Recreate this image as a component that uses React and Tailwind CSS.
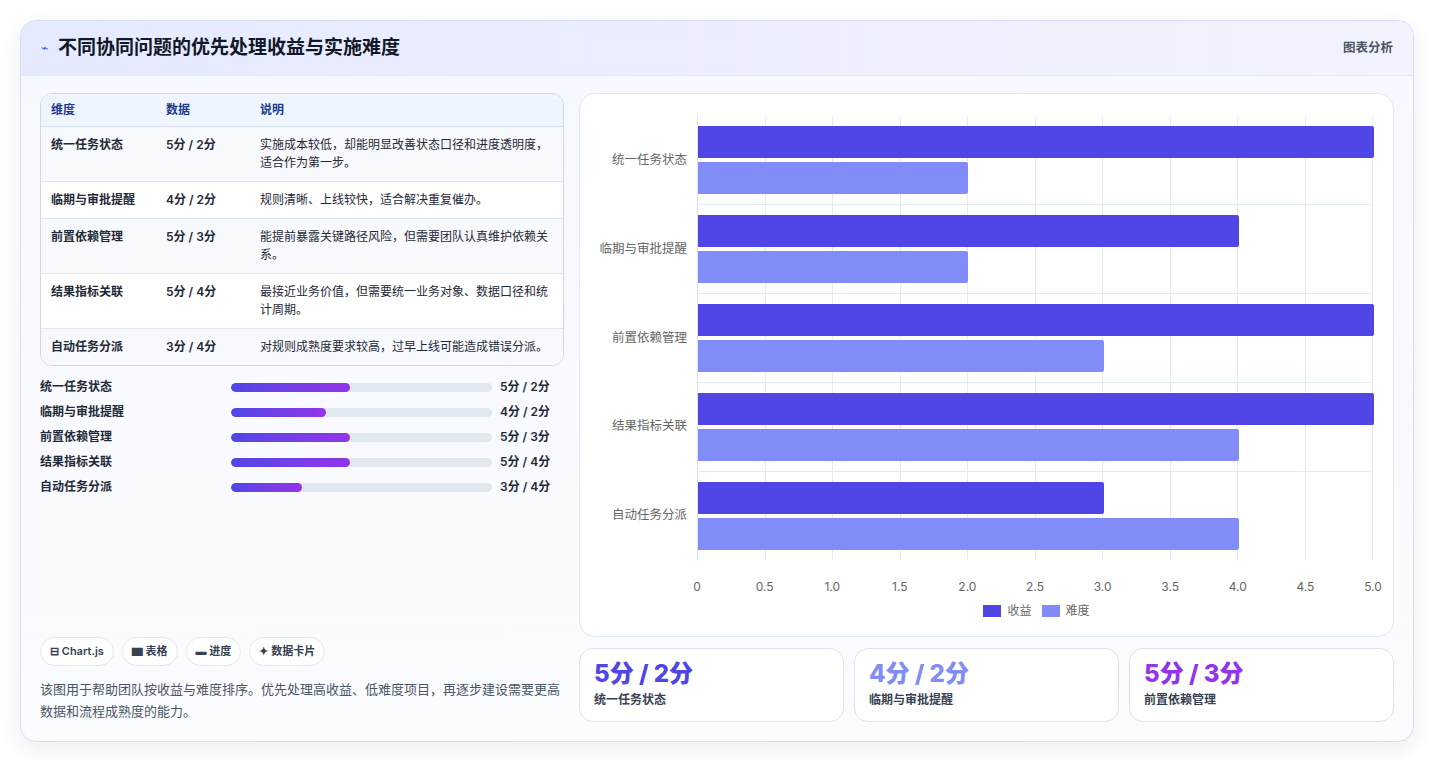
import React from 'react';

const rows = [
  { name: '统一任务状态', a: 5, b: 2, desc: '实施成本较低，却能明显改善状态口径和进度透明度，适合作为第一步。' },
  { name: '临期与审批提醒', a: 4, b: 2, desc: '规则清晰、上线较快，适合解决重复催办。' },
  { name: '前置依赖管理', a: 5, b: 3, desc: '能提前暴露关键路径风险，但需要团队认真维护依赖关系。' },
  { name: '结果指标关联', a: 5, b: 4, desc: '最接近业务价值，但需要统一业务对象、数据口径和统计周期。' },
  { name: '自动任务分派', a: 3, b: 4, desc: '对规则成熟度要求较高，过早上线可能造成错误分派。' },
];

const ticks = ['0', '0.5', '1.0', '1.5', '2.0', '2.5', '3.0', '3.5', '4.0', '4.5', '5.0'];

function Chart() {
  const W = 676;
  return (
    <div className="flex flex-col h-full">
      <div className="flex flex-1">
        <div className="w-[117px] flex flex-col pt-[22px] pb-[12px]">
          {rows.map((r) => (
            <div key={r.name} className="flex-1 flex items-center justify-end pr-[10px] text-[12.5px] text-[#666]">{r.name}</div>
          ))}
        </div>
        <div className="relative w-[676px] mt-[22px] mb-[12px] border-l border-[#d8e4ea]">
          <div className="absolute inset-0 flex">
            {ticks.slice(1).map((t) => (
              <div key={t} className="flex-1 border-r border-[#e3edf1]" />
            ))}
          </div>
          <div className="relative h-full flex flex-col">
            {rows.map((r, i) => (
              <div key={r.name} className={`flex-1 flex flex-col justify-center gap-[4px] ${i < 4 ? 'border-b border-[#e3edf1]' : ''}`}>
                <div className="h-[32px] bg-[#4f46e5] rounded-r-[2px]" style={{ width: (r.a / 5) * W }} />
                <div className="h-[32px] bg-[#818cf8] rounded-r-[2px]" style={{ width: (r.b / 5) * W }} />
              </div>
            ))}
          </div>
        </div>
      </div>
      <div className="flex pl-[117px] h-[30px]">
        <div className="relative w-[676px]">
          {ticks.map((t, i) => (
            <span key={t} className="absolute top-[6px] -translate-x-1/2 text-[12px] text-[#666]" style={{ left: i * 67.6 }}>{t}</span>
          ))}
        </div>
      </div>
      <div className="flex justify-center gap-[10px] pl-[100px] pb-[16px] text-[12px] text-[#666]">
        <span className="flex items-center gap-[6px]"><span className="w-[18px] h-[12px] bg-[#4f46e5]" />收益</span>
        <span className="flex items-center gap-[6px]"><span className="w-[18px] h-[12px] bg-[#818cf8]" />难度</span>
      </div>
    </div>
  );
}

export default function App() {
  return (
    <div className="min-h-[760px] bg-white p-[20px] pr-[21px]" style={{ fontFamily: 'Inter, "Noto Sans CJK SC", sans-serif' }}>
      <div className="rounded-[16px] border border-[#d6dcf3] shadow-[0_8px_24px_rgba(30,40,90,0.08)] bg-gradient-to-b from-[#f6f8ff] to-[#fafcff] overflow-hidden">
        <div className="h-[55px] flex items-center justify-between px-[20px] bg-gradient-to-r from-[#e6eaff] to-[#f2f3ff] border-b border-[#e6e9f7]">
          <div className="flex items-center gap-[10px]">
            <span className="text-[#3b5bdb] text-[12px]">⌁</span>
            <h1 className="text-[19px] font-bold text-[#111827]">不同协同问题的优先处理收益与实施难度</h1>
          </div>
          <span className="text-[12.5px] font-semibold text-[#4b5563]">图表分析</span>
        </div>
        <div className="flex gap-[15px] px-[19px] pt-[17px] pb-[19px]">
          <div className="w-[524px] flex flex-col">
            <div className="rounded-[12px] border border-[#cfd8e6] overflow-hidden bg-white">
              <div className="flex h-[33px] items-center bg-[#eef5ff] border-b border-[#d5deea] text-[12px] font-semibold text-[#1e3a8a]">
                <div className="w-[125px] pl-[10px]">维度</div>
                <div className="w-[94px]">数据</div>
                <div className="flex-1">说明</div>
              </div>
              {rows.map((r, i) => (
                <div key={r.name} className={`flex py-[9px] text-[12px] text-[#1f2937] ${i % 2 ? 'bg-white' : 'bg-[#f7f9fc]'} ${i < 4 ? 'border-b border-[#e2e8f0]' : ''}`}>
                  <div className="w-[125px] pl-[10px] font-semibold leading-[17px]">{r.name}</div>
                  <div className="w-[82px] font-semibold leading-[17px]">{r.a}分 / {r.b}分</div>
                  <div className="flex-1 pl-[12px] pr-[10px] leading-[18px]">{r.desc}</div>
                </div>
              ))}
            </div>
            <div className="flex flex-col gap-[9px] mt-[13px]">
              {rows.map((r) => (
                <div key={r.name} className="flex items-center h-[16px] text-[12px] font-semibold text-[#1f2937]">
                  <div className="w-[191px]">{r.name}</div>
                  <div className="w-[261px] h-[9px] rounded-full bg-[#e2e8f0] overflow-hidden">
                    <div className="h-full rounded-full bg-gradient-to-r from-[#4f46e5] to-[#9333ea]" style={{ width: `${(r.a / 11) * 100}%` }} />
                  </div>
                  <div className="ml-[8px]">{r.a}分 / {r.b}分</div>
                </div>
              ))}
            </div>
            <div className="flex-1" />
            <div className="flex gap-[8px] mt-[20px]">
              {['⊟ Chart.js', '▆ 表格', '▬ 进度', '✦ 数据卡片'].map((t) => (
                <span key={t} className="h-[29px] px-[9px] flex items-center rounded-full border border-[#e2e8f0] bg-white text-[11px] font-semibold text-[#374151]">{t}</span>
              ))}
            </div>
            <p className="mt-[12px] text-[13px] leading-[22px] text-[#4b5563]">该图用于帮助团队按收益与难度排序。优先处理高收益、低难度项目，再逐步建设需要更高数据和流程成熟度的能力。</p>
          </div>
          <div className="flex-1 flex flex-col gap-[11px]">
            <div className="h-[544px] rounded-[16px] border border-[#e2e8f0] bg-white">
              <Chart />
            </div>
            <div className="grid grid-cols-3 gap-[10px]">
              {[
                { v: '5分 / 2分', l: '统一任务状态', c: 'text-[#4f46e5]' },
                { v: '4分 / 2分', l: '临期与审批提醒', c: 'text-[#818cf8]' },
                { v: '5分 / 3分', l: '前置依赖管理', c: 'text-[#9333ea]' },
              ].map((s) => (
                <div key={s.l} className="h-[74px] rounded-[14px] border border-[#dde4f0] bg-white px-[14px] pt-[10px]">
                  <div className={`text-[24px] font-extrabold leading-[30px] ${s.c}`}>{s.v}</div>
                  <div className="text-[12px] font-semibold text-[#374151] mt-[2px]">{s.l}</div>
                </div>
              ))}
            </div>
          </div>
        </div>
      </div>
    </div>
  );
}
